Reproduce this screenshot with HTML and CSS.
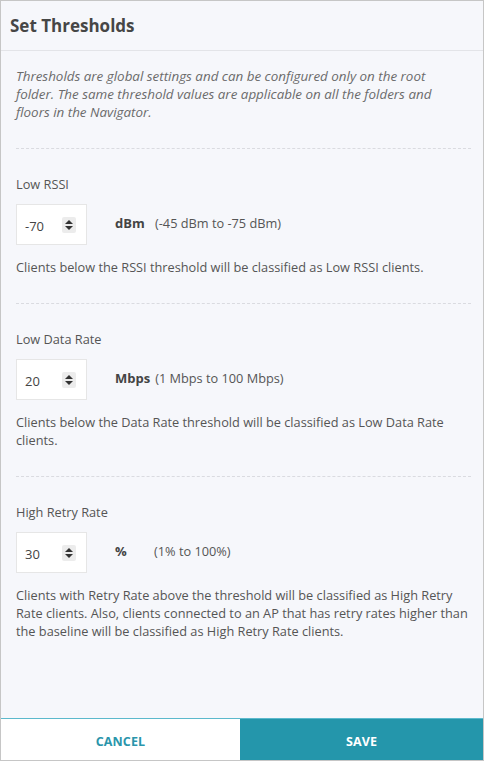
FILE: index.html
```html
<!DOCTYPE html>
<html lang="en">
<head>
<meta charset="utf-8">
<title>Set Thresholds</title>
<link rel="stylesheet" href="styles.css">
</head>
<body>
<div class="panel">
  <header class="panel-header">Set Thresholds</header>
  <div class="panel-body">
    <p class="intro">Thresholds are global settings and can be configured only on the root folder. The same threshold values are applicable on all the folders and floors in the Navigator.</p>

    <section class="threshold">
      <div class="label">Low RSSI</div>
      <div class="field-row">
        <div class="num-input"><span class="value">-70</span><span class="spinner"><i class="up"></i><i class="down"></i></span></div>
        <span class="unit">dBm</span>
        <span class="range">(-45 dBm to -75 dBm)</span>
      </div>
      <p class="help">Clients below the RSSI threshold will be classified as Low RSSI clients.</p>
    </section>

    <section class="threshold">
      <div class="label">Low Data Rate</div>
      <div class="field-row">
        <div class="num-input"><span class="value">20</span><span class="spinner"><i class="up"></i><i class="down"></i></span></div>
        <span class="unit unit-mbps">Mbps</span>
        <span class="range">(1 Mbps to 100 Mbps)</span>
      </div>
      <p class="help">Clients below the Data Rate threshold will be classified as Low Data Rate clients.</p>
    </section>

    <section class="threshold last">
      <div class="label">High Retry Rate</div>
      <div class="field-row">
        <div class="num-input"><span class="value">30</span><span class="spinner"><i class="up"></i><i class="down"></i></span></div>
        <span class="unit unit-pct">%</span>
        <span class="range">(1% to 100%)</span>
      </div>
      <p class="help">Clients with Retry Rate above the threshold will be classified as High Retry Rate clients. Also, clients connected to an AP that has retry rates higher than the baseline will be classified as High Retry Rate clients.</p>
    </section>
  </div>
  <footer class="panel-footer">
    <button class="btn btn-cancel">CANCEL</button>
    <button class="btn btn-save">SAVE</button>
  </footer>
</div>
</body>
</html>
```

FILE: styles.css
```css
* { box-sizing: border-box; }
html, body { margin: 0; padding: 0; }
body {
  font-family: "Open Sans", "Noto Sans", sans-serif;
  background: #ffffff;
  width: 484px;
  height: 761px;
}
.panel {
  width: 484px;
  height: 761px;
  border: 1px solid #c6c6c6;
  background: #f6f7fb;
  display: flex;
  flex-direction: column;
}
.panel-header {
  height: 50px;
  padding: 0 0 0 9px;
  display: flex;
  align-items: center;
  font-size: 17px;
  font-weight: 700;
  color: #464646;
  border-bottom: 1px solid #e3e4e8;
}
.panel-body {
  flex: 1;
  padding: 0 12px 0 15px;
}
.intro {
  margin: 0;
  padding: 16px 22px 27px 0;
  font-size: 13.4px;
  line-height: 18px;
  font-style: italic;
  color: #6b6b6b;
  border-bottom: 1px dashed #dadbe0;
}
.threshold {
  padding: 26px 0 27px;
  border-bottom: 1px dashed #dadbe0;
}
.threshold.last { border-bottom: none; }
.label {
  font-size: 12.75px;
  line-height: 18px;
  color: #555;
}
.field-row {
  display: flex;
  align-items: center;
  margin-top: 11px;
}
.num-input {
  width: 71px;
  height: 41px;
  background: #fff;
  border: 1px solid #e6e6e6;
  display: flex;
  align-items: center;
  padding: 0 0 0 8px;
}
.value {
  flex: 1;
  font-size: 13px;
  color: #444;
  padding-top: 3px;
}
.spinner {
  width: 14px;
  height: 16px;
  margin-right: 10px;
  background: #ececec;
  border-radius: 2px;
  display: flex;
  flex-direction: column;
  align-items: center;
  justify-content: center;
  gap: 2px;
}
.spinner i {
  display: block;
  width: 0;
  height: 0;
  border-left: 4px solid transparent;
  border-right: 4px solid transparent;
}
.spinner .up { border-bottom: 4px solid #333; }
.spinner .down { border-top: 4px solid #333; }
.unit {
  margin-left: 28px;
  font-size: 13px;
  font-weight: 700;
  color: #444;
  width: 40px;
  margin-top: -3px;
}
.unit-mbps { width: auto; margin-right: 5px; }
.unit-pct { width: 39px; }
.range {
  font-size: 12.75px;
  color: #555;
  margin-top: -3px;
}
.help {
  margin: 13px 0 0;
  font-size: 12.75px;
  line-height: 18px;
  color: #555;
}
.panel-footer {
  height: 42px;
  display: flex;
  border-top: 1px solid #5cb9cc;
}
.btn {
  flex: 1;
  border: none;
  margin: 0;
  font-family: "Open Sans", "Noto Sans", sans-serif;
  font-size: 12.5px;
  font-weight: 700;
  letter-spacing: 0.1px;
  cursor: pointer;
  padding-top: 4px;
}
.btn-cancel {
  background: #ffffff;
  color: #2a95ab;
  flex: 0 0 239px;
}
.btn-save {
  background: #2496ab;
  color: #ffffff;
}
```
